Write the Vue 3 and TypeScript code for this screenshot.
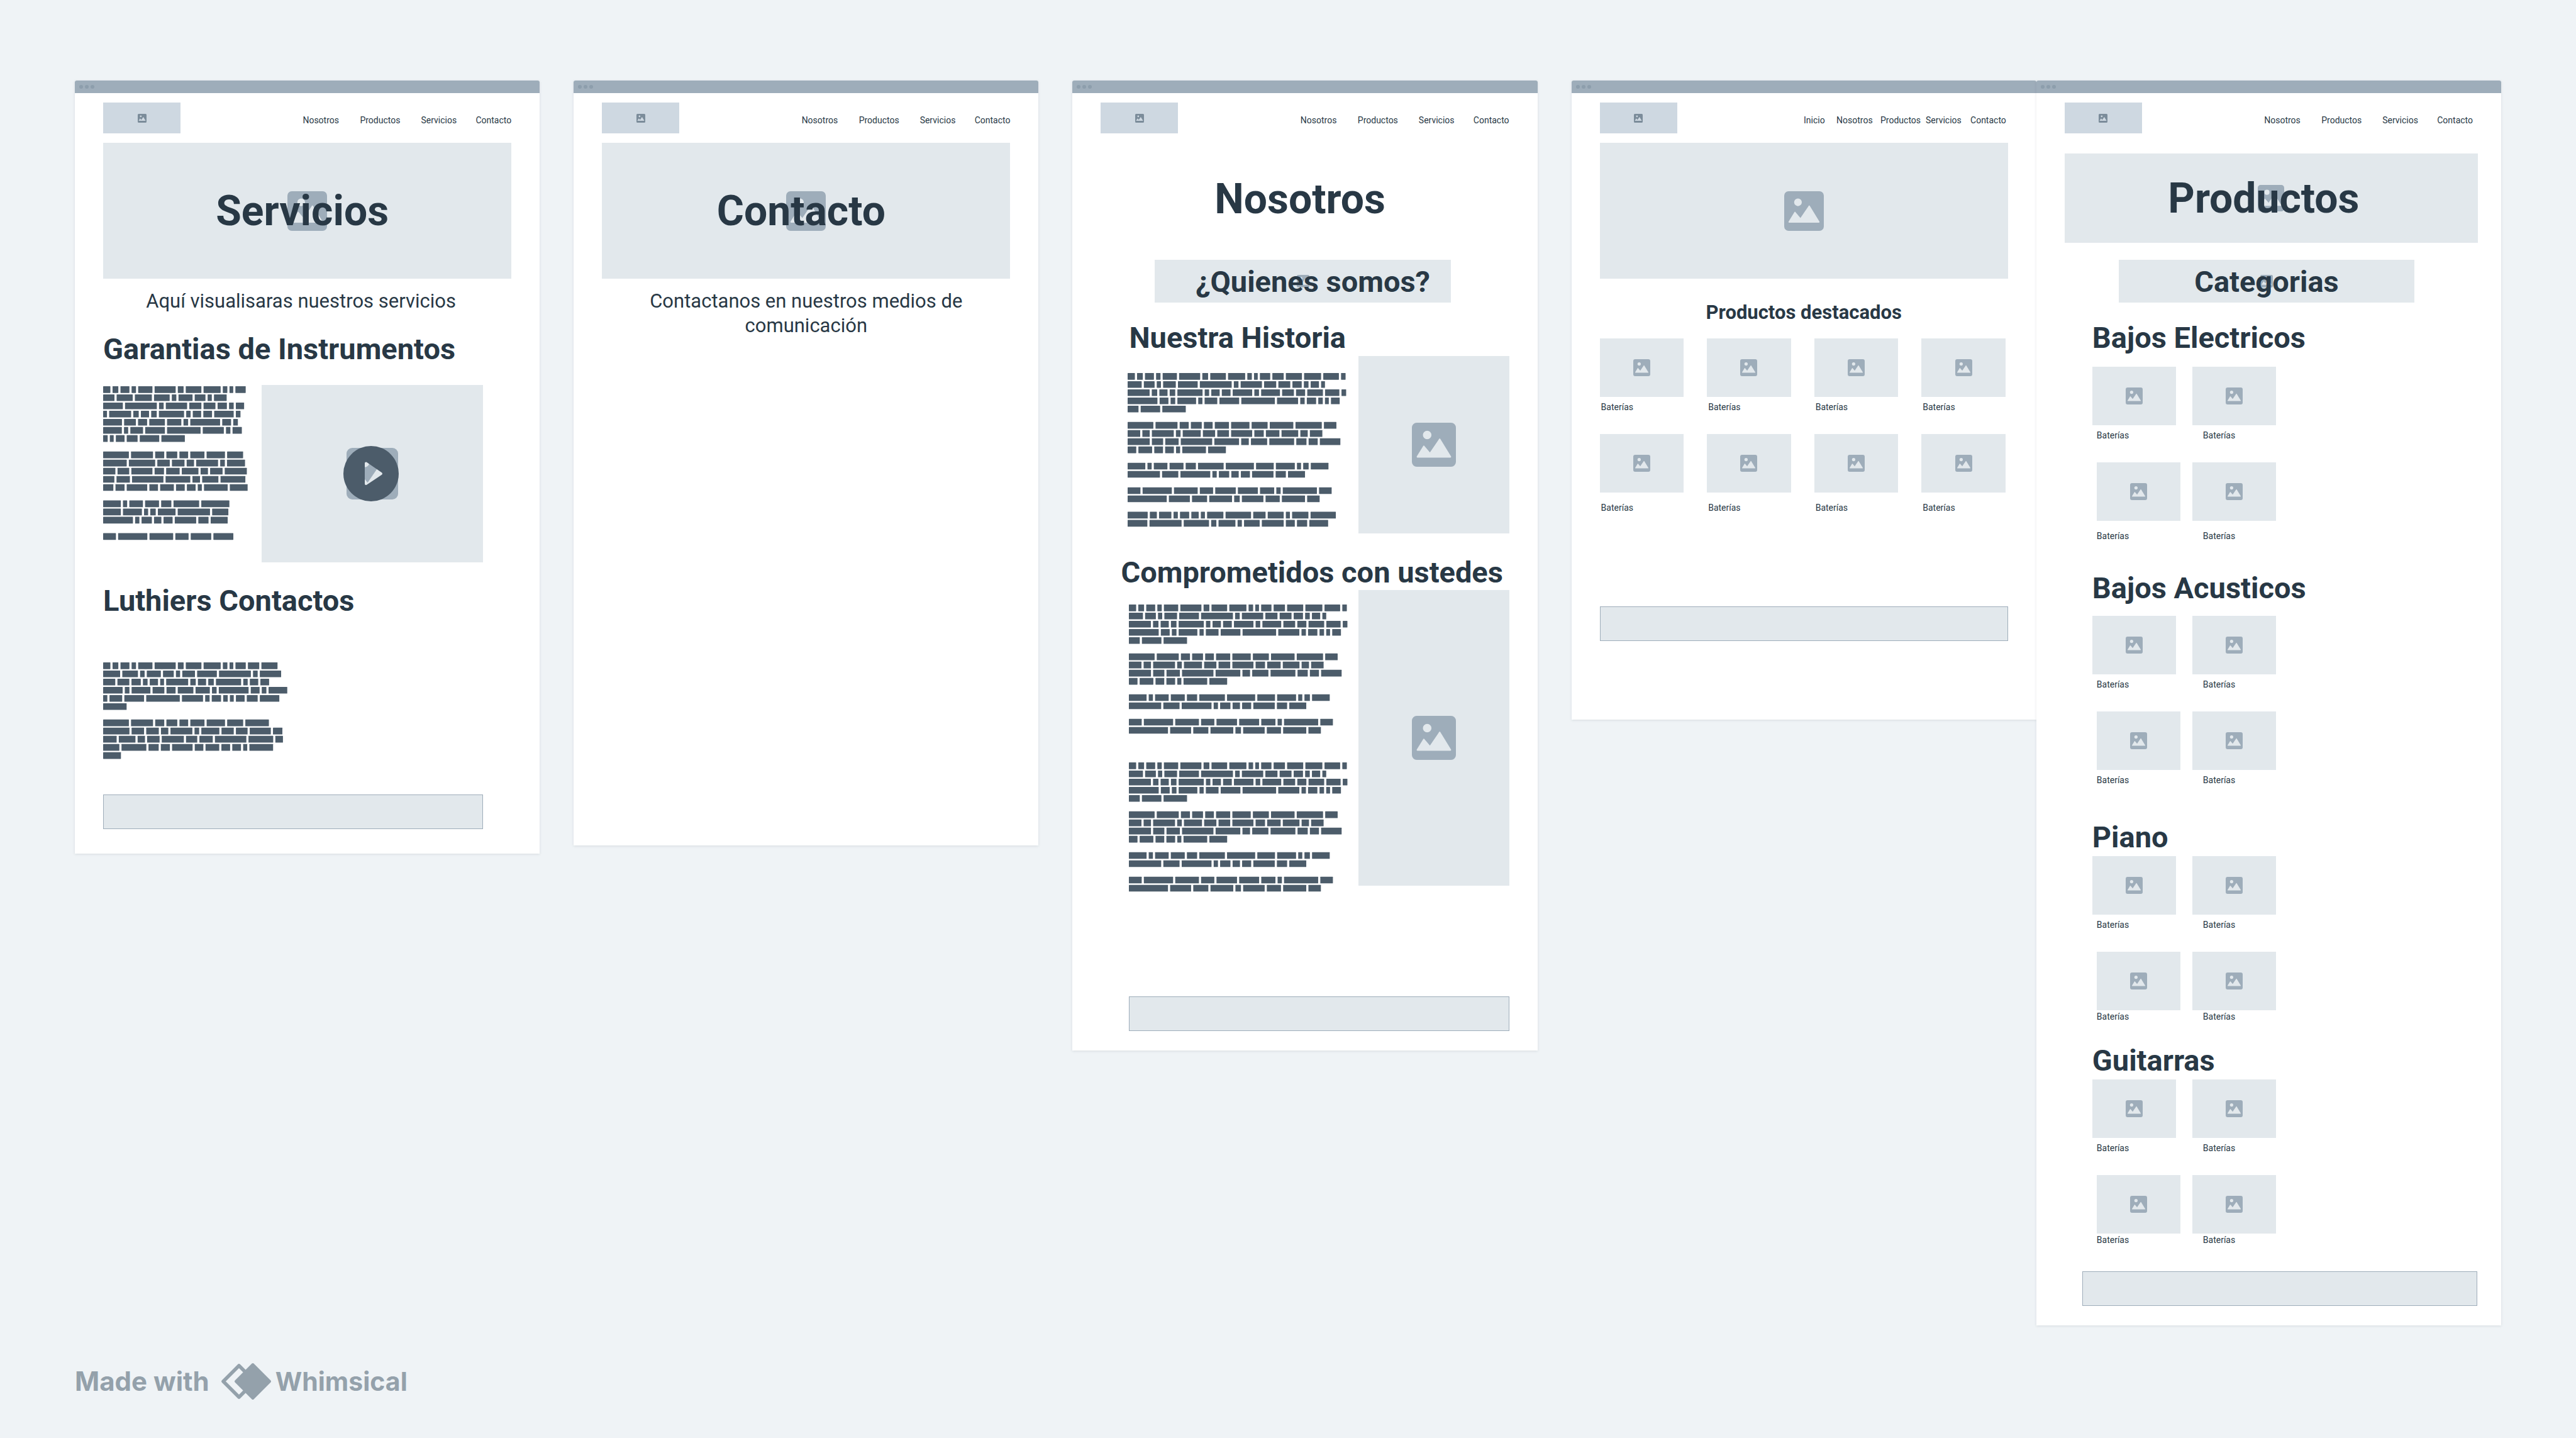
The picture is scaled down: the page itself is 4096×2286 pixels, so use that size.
<script setup lang="ts">
interface Rect {
  x: number
  y: number
  w: number
}

interface Block {
  width: number
  height: number
  rects: Rect[]
}

interface Category {
  name: string
  spacing: string
}

const links: string[] = ['Nosotros', 'Productos', 'Servicios', 'Contacto']
const homeLinks: string[] = ['Inicio', ...links]

const categories: Category[] = [
  { name: 'Bajos Electricos', spacing: 'first' },
  { name: 'Bajos Acusticos', spacing: 'second' },
  { name: 'Piano', spacing: 'third' },
  { name: 'Guitarras', spacing: 'fourth' },
]

// Word widths of the dummy copy, one list per paragraph.
const copy: number[][] = [
  [
    64, 51, 79, 39, 126, 186, 51, 138, 151, 40, 33, 91, 100, 142, 150, 138, 40, 124, 95, 37, 112,
    174, 281, 41, 188, 107, 105, 82, 41, 73, 34, 194, 48, 72, 49, 222, 39, 74, 77, 172, 41, 166,
    104, 80, 138, 126, 41, 263, 78, 41, 165, 37, 112, 174, 296, 186, 39, 82, 40, 34, 77, 96, 172,
    207,
  ],
  [
    227, 194, 80, 96, 77, 125, 162, 141, 208, 232, 110, 111, 65, 193, 41, 159, 108, 103, 186, 83,
    119, 147, 65, 110, 195, 99, 118, 277, 218, 67, 143, 219, 90, 80, 181, 76, 121, 77, 77, 36, 209,
    157,
  ],
  [
    156, 37, 120, 123, 90, 226, 248, 156, 167, 36, 48, 156, 285, 143, 263, 38, 91, 65, 80, 189, 90,
    150,
  ],
  [113, 258, 209, 117, 181, 176, 125, 38, 301, 111, 345, 185, 133, 201, 49, 190, 125, 204, 110],
  [
    177, 62, 109, 38, 81, 65, 36, 144, 225, 109, 141, 36, 144, 223, 174, 283, 223, 46, 149, 38, 138,
    193, 79, 90, 166,
  ],
]

const WORD_GAP = 19
const LINE = 72

// Breaks the words into lines no wider than the given measure.
function layOut(width: number, paragraphs: number[][]): Block {
  const rects: Rect[] = []
  let y = 0
  paragraphs.forEach((words) => {
    let x = 0
    words.forEach((w) => {
      if (x > 0 && x + w > width) {
        x = 0
        y += LINE
      }
      rects.push({ x, y, w })
      x += w + WORD_GAP
    })
    y += LINE * 2
  })
  return { width, height: y - LINE, rects }
}

const warranty = layOut(1282, [...copy.slice(0, 3), copy[3].slice(0, 6)])
const luthiers = layOut(1642, copy.slice(0, 2))
const history = layOut(1931, copy)
const commitment = layOut(1931, copy.slice(0, 4))
</script>

<template>
  <svg class="defs" aria-hidden="true">
    <symbol id="picture" viewBox="0 0 144 144">
      <path
        fill="currentColor"
        fill-rule="evenodd"
        d="M16 0H128a16 16 0 0 1 16 16V128a16 16 0 0 1-16 16H16a16 16 0 0 1-16-16V16A16 16 0 0 1 16 0ZM50 26a14 14 0 1 0 0 28a14 14 0 1 0 0-28ZM18 114c-2 0-3-2-2-4L37 76q2-3 4 0L59 97L89 53q2-3 4 0L128 110c1 2 0 4-2 4Z"
      />
    </symbol>
  </svg>

  <div class="board">
    <main class="screens">
      <section class="screen">
        <div class="chrome"><i></i><i></i><i></i></div>
        <div class="body">
          <header class="top">
            <div class="logo"><svg class="icon"><use href="#picture" /></svg></div>
            <nav class="nav">
              <a v-for="link in links" :key="link" href="#">{{ link }}</a>
            </nav>
          </header>
          <div class="hero">
            <svg class="icon icon-hero"><use href="#picture" /></svg>
            <h1>Servicios</h1>
          </div>
          <p class="lead lead-services">Aquí visualisaras nuestros servicios</p>
          <h2 class="warranty-title">Garantias de Instrumentos</h2>
          <div class="media media-services">
            <svg class="copy copy-narrow" :viewBox="`0 0 ${warranty.width} ${warranty.height}`">
              <rect
                v-for="(r, i) in warranty.rects"
                :key="i"
                :x="r.x"
                :y="r.y"
                :width="r.w"
                height="59"
                rx="3"
              />
            </svg>
            <div class="video">
              <svg class="icon icon-video"><use href="#picture" /></svg>
              <button class="play" type="button" aria-label="Reproducir">
                <svg viewBox="0 0 88 88">
                  <path
                    fill="currentColor"
                    fill-rule="evenodd"
                    d="M44 0a44 44 0 1 1 0 88a44 44 0 1 1 0-88ZM34 27.500c0-1.600 1.600-2.500 3-1.700L61 42.200c1.300.9 1.300 2.700 0 3.600L37 61.700c-1.400.9-3 0-3-1.700Z"
                  />
                </svg>
              </button>
            </div>
          </div>
          <h2 class="luthiers-title">Luthiers Contactos</h2>
          <svg
            class="copy copy-medium"
            :viewBox="`0 0 ${luthiers.width} ${luthiers.height}`"
          >
            <rect
              v-for="(r, i) in luthiers.rects"
              :key="i"
              :x="r.x"
              :y="r.y"
              :width="r.w"
              height="59"
              rx="3"
            />
          </svg>
          <footer class="foot foot-services"></footer>
        </div>
      </section>

      <section class="screen screen-contact">
        <div class="chrome"><i></i><i></i><i></i></div>
        <div class="body">
          <header class="top">
            <div class="logo"><svg class="icon"><use href="#picture" /></svg></div>
            <nav class="nav">
              <a v-for="link in links" :key="link" href="#">{{ link }}</a>
            </nav>
          </header>
          <div class="hero">
            <svg class="icon icon-hero"><use href="#picture" /></svg>
            <h1>Contacto</h1>
          </div>
          <p class="lead">Contactanos en nuestros medios de comunicación</p>
        </div>
      </section>

      <section class="screen">
        <div class="chrome"><i></i><i></i><i></i></div>
        <div class="body">
          <header class="top">
            <div class="logo"><svg class="icon"><use href="#picture" /></svg></div>
            <nav class="nav">
              <a v-for="link in links" :key="link" href="#">{{ link }}</a>
            </nav>
          </header>
          <h1 class="about-title">Nosotros</h1>
          <div class="band band-about">
            <svg class="icon icon-band"><use href="#picture" /></svg>
            <h2>¿Quienes somos?</h2>
          </div>
          <h2 class="history-title">Nuestra Historia</h2>
          <div class="media media-history">
            <svg class="copy copy-wide" :viewBox="`0 0 ${history.width} ${history.height}`">
              <rect
                v-for="(r, i) in history.rects"
                :key="i"
                :x="r.x"
                :y="r.y"
                :width="r.w"
                height="59"
                rx="3"
              />
            </svg>
            <div class="photo"><svg class="icon icon-photo"><use href="#picture" /></svg></div>
          </div>
          <h2 class="commitment-title">Comprometidos con ustedes</h2>
          <div class="media media-commitment">
            <div class="stack">
              <svg
                v-for="n in 2"
                :key="n"
                class="copy copy-wide"
                :viewBox="`0 0 ${commitment.width} ${commitment.height}`"
              >
                <rect
                  v-for="(r, i) in commitment.rects"
                  :key="i"
                  :x="r.x"
                  :y="r.y"
                  :width="r.w"
                  height="59"
                  rx="3"
                />
              </svg>
            </div>
            <div class="photo photo-tall">
              <svg class="icon icon-photo"><use href="#picture" /></svg>
            </div>
          </div>
          <footer class="foot foot-about"></footer>
        </div>
      </section>

      <div class="pair">
        <section class="screen">
          <div class="chrome"><i></i><i></i><i></i></div>
          <div class="body">
            <header class="top">
              <div class="logo"><svg class="icon"><use href="#picture" /></svg></div>
              <nav class="nav nav-home">
                <a v-for="link in homeLinks" :key="link" href="#">{{ link }}</a>
              </nav>
            </header>
            <div class="hero">
              <svg class="icon icon-hero"><use href="#picture" /></svg>
            </div>
            <h3>Productos destacados</h3>
            <div class="featured">
              <figure v-for="n in 8" :key="n" class="card">
                <div class="thumb"><svg class="icon"><use href="#picture" /></svg></div>
                <figcaption>Baterías</figcaption>
              </figure>
            </div>
            <footer class="foot foot-home"></footer>
          </div>
        </section>

        <section class="screen">
          <div class="chrome"><i></i><i></i><i></i></div>
          <div class="body">
            <header class="top">
              <div class="logo"><svg class="icon"><use href="#picture" /></svg></div>
              <nav class="nav">
                <a v-for="link in links" :key="link" href="#">{{ link }}</a>
              </nav>
            </header>
            <div class="hero hero-products">
              <svg class="icon icon-products"><use href="#picture" /></svg>
              <h1>Productos</h1>
            </div>
            <div class="band band-products">
              <svg class="icon icon-band"><use href="#picture" /></svg>
              <h2>Categorias</h2>
            </div>
            <section
              v-for="category in categories"
              :key="category.name"
              class="category"
              :class="category.spacing"
            >
              <h2>{{ category.name }}</h2>
              <div v-for="row in 2" :key="row" class="row">
                <figure v-for="n in 2" :key="n" class="card">
                  <div class="thumb"><svg class="icon"><use href="#picture" /></svg></div>
                  <figcaption>Baterías</figcaption>
                </figure>
              </div>
            </section>
            <footer class="foot foot-products"></footer>
          </div>
        </section>
      </div>
    </main>

    <a class="credit" href="#">
      <span>Made with</span>
      <svg viewBox="0 0 82 60" aria-hidden="true">
        <g fill="none" stroke="currentColor" stroke-linejoin="round">
          <path stroke-width="5.600" d="M30 5L55 30L30 55L5 30Z" />
          <path fill="currentColor" stroke-width="4" d="M52 3L79 30L52 57L25 30Z" />
        </g>
      </svg>
      <span class="wordmark">Whimsical</span>
    </a>
  </div>
</template>

<style>
body {
  background: #eff3f6;
}
</style>

<style scoped>
.defs {
  position: absolute;
  width: 0;
  height: 0;
}

.board {
  box-sizing: border-box;
  display: flex;
  flex-direction: column;
  justify-content: space-between;
  min-height: 100vh;
  padding: 128px 119px 60px;
  background: #eff3f6;
  color: #283845;
  font-family: Roboto, 'Liberation Sans', sans-serif;
}

.screens {
  display: flex;
  align-items: flex-start;
  gap: 54px;
}

.screen {
  flex: 1;
  min-width: 0;
  border-radius: 3px 3px 0 0;
  background: #fff;
  box-shadow: 0 1px 4px rgb(40 56 69 / 12%);
}

.screen-contact {
  min-height: 1216px;
}

.pair {
  display: flex;
  flex: 2;
  align-items: flex-start;
  min-width: 0;
}

.chrome {
  display: flex;
  align-items: center;
  gap: 3px;
  height: 20px;
  padding-left: 7px;
  border-radius: 3px 3px 0 0;
  background: #9eadba;
}

.chrome i {
  width: 6px;
  height: 6px;
  border-radius: 50%;
  background: #8d9eac;
}

.body {
  padding: 15px 45px 0;
}

.top {
  display: flex;
  align-items: flex-end;
  justify-content: space-between;
}

.logo {
  display: grid;
  place-items: center;
  width: 123px;
  height: 49px;
  background: #ced8e1;
}

.nav {
  display: grid;
  grid-template-columns: 91px 97px 87px auto;
  padding-bottom: 11px;
}

.nav-home {
  grid-template-columns: 52px 70px 72px 71px auto;
  padding-right: 3px;
}

.nav a {
  color: inherit;
  font-size: 14px;
  font-weight: 400;
  line-height: 20px;
  text-decoration: none;
}

h1,
h2,
h3,
p,
figure {
  margin: 0;
}

h1 {
  padding-right: 16px;
  font-size: 66px;
  font-weight: 700;
  line-height: 76px;
  text-align: center;
}

h2 {
  font-size: 47px;
  font-weight: 700;
  line-height: 56px;
}

h3 {
  margin-top: 34px;
  font-size: 31px;
  font-weight: 700;
  line-height: 39px;
  text-align: center;
}

.icon {
  display: block;
  color: #9eadba;
}

.logo .icon {
  width: 14px;
  height: 14px;
  color: #7b8c9a;
}

.hero,
.band,
.video,
.photo,
.thumb {
  display: grid;
  place-items: center;
  background: #e2e8ec;
}

.hero > *,
.band > *,
.video > * {
  grid-area: 1 / 1;
}

.hero {
  height: 216px;
  margin-top: 15px;
}

.hero h1,
.band h2 {
  padding-top: 2px;
}

.icon-hero {
  width: 63px;
  height: 63px;
}

.hero-products {
  height: 142px;
  margin: 32px -8px 0 0;
}

.hero-products h1 {
  padding-right: 24px;
}

.icon-products {
  width: 42px;
  height: 42px;
}

.lead {
  margin-top: 16px;
  font-size: 31px;
  font-weight: 400;
  line-height: 39px;
  text-align: center;
}

.lead-services {
  padding-right: 20px;
}

.warranty-title {
  margin-top: 29px;
}

.media {
  display: flex;
  align-items: flex-start;
  justify-content: space-between;
}

.media-services {
  margin: 29px 45px 0 0;
}

.copy {
  display: block;
  height: auto;
  fill: #4c5c6a;
}

.copy-narrow {
  width: 231px;
  padding-top: 2px;
}

.copy-medium {
  width: 296px;
  margin-top: 70px;
}

.copy-wide {
  width: 348px;
}

.video {
  width: 352px;
  height: 282px;
}

.icon-video {
  width: 82px;
  height: 82px;
}

.play {
  padding: 0 4px 0 0;
  border: 0;
  background: none;
  color: #4c5c6a;
}

.play svg {
  display: block;
  width: 88px;
  height: 88px;
}

.luthiers-title {
  margin-top: 33px;
}

.foot {
  box-sizing: border-box;
  height: 55px;
  border: 1px solid #9eadba;
  background: #e2e8ec;
}

.foot-services {
  margin: 54px 45px 39px 0;
}

.about-title {
  margin-top: 67px;
}

.band {
  height: 68px;
  margin: 58px 93px 0 86px;
}

.icon-band {
  width: 20px;
  height: 20px;
}

.band-about h2 {
  padding-left: 32px;
}

.band-products {
  margin-top: 27px;
}

.history-title {
  margin: 28px 0 1px 45px;
}

.media-history {
  margin-left: 43px;
}

.media-history .copy {
  padding-top: 27px;
}

.photo {
  width: 240px;
  height: 282px;
}

.photo-tall {
  height: 470px;
}

.icon-photo {
  width: 70px;
  height: 70px;
}

.commitment-title {
  margin: 34px 0 0 32px;
}

.media-commitment {
  margin-left: 45px;
}

.stack {
  display: flex;
  flex-direction: column;
  gap: 43px;
  padding-top: 23px;
}

.foot-about {
  margin: 165px 0 31px 45px;
}

.card {
  display: flex;
  flex-direction: column;
  gap: 6px;
}

.thumb {
  height: 93px;
}

.thumb .icon {
  width: 27px;
  height: 27px;
}

figcaption {
  font-size: 14px;
  font-weight: 400;
  line-height: 20px;
}

.featured {
  display: grid;
  grid-template-columns: repeat(4, 1fr);
  gap: 33px 37px;
  margin: 22px 4px 0 0;
}

.featured figcaption {
  padding-left: 2px;
}

.featured .card:nth-child(n + 5) {
  gap: 14px;
}

.foot-home {
  margin: 147px 0 125px;
}

.category {
  width: 292px;
  margin-left: 44px;
}

.category h2 {
  white-space: nowrap;
}

.row {
  display: flex;
  justify-content: space-between;
}

.row .card {
  width: 133px;
}

.row .card:first-child figcaption {
  padding-left: 7px;
}

.row .card:last-child figcaption {
  padding-left: 17px;
}

.row:last-child {
  margin-top: 33px;
  padding-left: 7px;
}

.row:last-child .card:first-child figcaption {
  padding-left: 0;
}

.first {
  margin-top: 28px;
}

.first h2 {
  margin-bottom: 18px;
}

.first .row:last-child .card {
  gap: 14px;
}

.second {
  margin-top: 45px;
}

.second h2 {
  margin-bottom: 16px;
}

.third {
  margin-top: 53px;
}

.fourth {
  margin-top: 32px;
}

.third h2,
.fourth h2 {
  margin-bottom: 2px;
}

.third .row:last-child .card,
.fourth .row:last-child .card {
  gap: 0;
}

.foot-products {
  margin: 40px -7px 31px 28px;
}

.credit {
  display: flex;
  align-items: center;
  align-self: flex-start;
  color: #94a1ab;
  font-family: Inter, 'Liberation Sans', sans-serif;
  font-size: 42px;
  font-weight: 700;
  line-height: 60px;
  text-decoration: none;
}

.credit svg {
  width: 82px;
  height: 60px;
  margin: 0 6px 0 17px;
}

.credit .wordmark {
  font-size: 41px;
}
</style>
